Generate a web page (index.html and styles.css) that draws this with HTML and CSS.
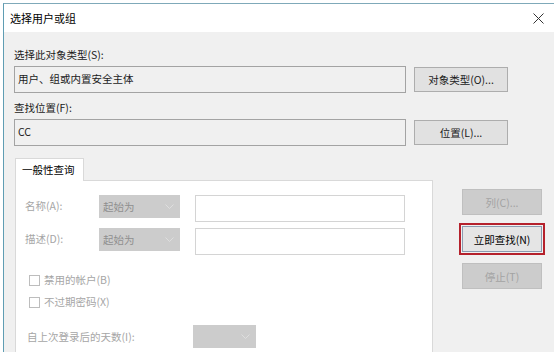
FILE: index.html
```html
<!DOCTYPE html>
<html lang="zh-CN">
<head>
    <meta charset="UTF-8">
    <meta name="viewport" content="width=device-width, initial-scale=1.0">
    <title>选择用户或组</title>
    <link rel="stylesheet" href="styles.css">
</head>
<body>
    <div class="window">
        <div class="titlebar">
            <span class="title">选择用户或组</span>
            <svg class="close" width="11" height="11" viewBox="0 0 11 11">
                <path d="M0.5 0.5 L10.5 10.5 M10.5 0.5 L0.5 10.5" stroke="#333" stroke-width="1" fill="none"/>
            </svg>
        </div>
        <div class="content">
            <div class="label">选择此对象类型(S):</div>
            <div class="field-row">
                <div class="field">用户、组或内置安全主体</div>
                <button class="btn">对象类型(O)...</button>
            </div>
            <div class="label label2">查找位置(F):</div>
            <div class="field-row">
                <div class="field">CC</div>
                <button class="btn">位置(L)...</button>
            </div>
            <div class="lower">
                <div class="query">
                    <div class="tab">一般性查询</div>
                    <div class="panel">
                        <div class="q-row">
                            <span class="q-label">名称(A):</span>
                            <div class="combo">起始为<svg class="chev" width="9" height="5" viewBox="0 0 9 5"><path d="M0.5 0.5 L4.5 4.5 L8.5 0.5" stroke="#dedede" fill="none"/></svg></div>
                            <div class="q-input"></div>
                        </div>
                        <div class="q-row second">
                            <span class="q-label">描述(D):</span>
                            <div class="combo">起始为<svg class="chev" width="9" height="5" viewBox="0 0 9 5"><path d="M0.5 0.5 L4.5 4.5 L8.5 0.5" stroke="#dedede" fill="none"/></svg></div>
                            <div class="q-input"></div>
                        </div>
                        <div class="checks">
                            <div class="check"><span class="box"></span>禁用的帐户(B)</div>
                            <div class="check"><span class="box"></span>不过期密码(X)</div>
                        </div>
                        <div class="days">
                            <span class="days-label">自上次登录后的天数(I):</span>
                            <div class="combo small"><svg class="chev" width="9" height="5" viewBox="0 0 9 5"><path d="M0.5 0.5 L4.5 4.5 L8.5 0.5" stroke="#dedede" fill="none"/></svg></div>
                        </div>
                    </div>
                </div>
                <div class="side">
                    <button class="btn side-btn disabled">列(C)...</button>
                    <button class="btn side-btn focus">立即查找(N)</button>
                    <button class="btn side-btn disabled">停止(T)</button>
                </div>
            </div>
        </div>
    </div>
</body>
</html>
```

FILE: styles.css
```css
* {
box-sizing: border-box;
margin: 0;
padding: 0;
}

body {
background: #fff;
font-family: "Noto Sans CJK SC", "Noto Sans", sans-serif;
font-size: 10.5px;
color: #1a1a1a;
}

.window {
margin: 3px 0 0 3px;
width: 551px;
height: 349px;
border-left: 1px solid #5f9db3;
border-top: 1px solid #7fa9b9;
background: #f0f0f0;
overflow: hidden;
}

.titlebar {
height: 28px;
background: #fff;
display: flex;
align-items: center;
justify-content: space-between;
padding: 0 10px 0 6px;
}

.title {
font-size: 11px;
line-height: 14px;
color: #000;
}

.content {
padding: 16px 0 0 10px;
}

.label {
line-height: 14px;
}

.label2 {
margin-top: 8px;
}

.field-row {
display: flex;
align-items: flex-start;
gap: 8px;
margin-top: 4px;
}

.field {
width: 392px;
height: 27px;
border: 1px solid #a3a3a3;
background: #f0f0f0;
padding-left: 3px;
line-height: 23px;
}

.btn {
font-family: inherit;
font-size: 10.5px;
color: #1a1a1a;
background: #e1e1e1;
border: 1px solid #adadad;
width: 94px;
height: 25px;
margin-top: 1px;
}

.lower {
display: flex;
margin-top: 12px;
}

.query {
width: 418px;
margin-left: 1px;
}

.tab {
width: 69px;
height: 23px;
background: #fff;
border: 1px solid #d9d9d9;
border-bottom: none;
padding-left: 6px;
line-height: 21px;
color: #000;
position: relative;
z-index: 1;
}

.panel {
height: 200px;
background: #fff;
border: 1px solid #d9d9d9;
margin-top: -1px;
padding: 14px 0 0 9px;
color: #a6a6a6;
}

.q-row {
display: flex;
align-items: flex-start;
}

.q-row.second {
margin-top: 6px;
}

.q-label {
width: 74px;
line-height: 22px;
}

.combo {
width: 81px;
height: 23px;
background: #cccccc;
color: #8f8f8f;
display: flex;
align-items: center;
justify-content: space-between;
padding: 0 6px 0 4px;
}

.combo.small {
width: 63px;
justify-content: flex-end;
}

.q-input {
width: 210px;
height: 27px;
margin-left: 15px;
border: 1px solid #d4d4d4;
background: #fff;
}

.checks {
margin-top: 18px;
padding-left: 4px;
display: flex;
flex-direction: column;
gap: 8px;
}

.check {
display: flex;
align-items: center;
line-height: 14px;
}

.box {
width: 11px;
height: 11px;
border: 1px solid #bdbdbd;
margin-right: 4px;
}

.days {
display: flex;
align-items: center;
margin-top: 16px;
padding-left: 2px;
}

.days-label {
width: 166px;
}

.side {
margin-left: 29px;
padding-top: 31px;
display: flex;
flex-direction: column;
gap: 11px;
}

.side-btn {
width: 80px;
height: 26px;
margin-top: 0;
}

.side-btn.disabled {
background: #cccccc;
border-color: #bfbfbf;
color: #a3a3a3;
}

.side-btn.focus {
background: #e5e5e5;
border-color: #8a9bb0;
color: #000;
outline: 2px solid #b5212c;
outline-offset: 1px;
}
```
